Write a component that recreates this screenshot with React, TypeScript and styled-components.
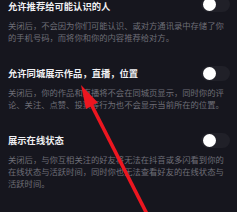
import React from "react";
import styled, { createGlobalStyle } from "styled-components";

const GlobalStyle = createGlobalStyle`
  html, body {
    margin: 0;
    padding: 0;
    background: #16161e;
    overflow: hidden;
  }
`;

const Page = styled.div`
  position: relative;
  width: 237px;
  height: 212px;
  overflow: hidden;
  background: #16161e;
  font-family: "Noto Sans CJK SC", "Noto Sans", sans-serif;
`;

const List = styled.div`
  display: flex;
  flex-direction: column;
  gap: 23px;
  padding: 0 8px;
  margin-top: -1px;
`;

const Section = styled.div`
  display: flex;
  flex-direction: column;
  gap: 6px;
`;

const TitleRow = styled.div`
  display: flex;
  align-items: center;
  justify-content: space-between;
  height: 14px;
`;

const Title = styled.div`
  color: #f0f0f3;
  font-size: 9.3px;
  line-height: 14px;
  font-weight: 600;
  white-space: nowrap;
`;

const Track = styled.div<{ $up?: boolean }>`
  width: 29px;
  height: 15px;
  border-radius: 8px;
  background: #202028;
  display: flex;
  align-items: center;
  padding-left: 2px;
  box-sizing: border-box;
  margin-right: -1px;
  margin-top: ${(p) => (p.$up ? "-4px" : "0")};
`;

const Knob = styled.div`
  width: 13px;
  height: 13px;
  border-radius: 50%;
  background: #ffffff;
`;

const Desc = styled.div`
  color: #6e6e77;
  font-size: 8.3px;
  line-height: 12px;
  white-space: nowrap;
`;

const Arrow = styled.svg`
  position: absolute;
  left: 0;
  top: 0;
  pointer-events: none;
`;

const sections = [
  {
    title: "允许推荐给可能认识的人",
    lines: [
      "关闭后，不会因为你们可能认识、或对方通讯录中存储了你",
      "的手机号码，而将你和你的内容推荐给对方。",
    ],
    up: true,
  },
  {
    title: "允许同城展示作品，直播，位置",
    lines: [
      "关闭后，你的作品和直播将不会在同城页显示，同时你的评",
      "论、关注、点赞、投票等行为也不会显示当前所在的位置。",
    ],
  },
  {
    title: "展示在线状态",
    lines: [
      "关闭后，与你互相关注的好友将无法在抖音或多闪看到你的",
      "在线状态与活跃时间，同时你也无法查看好友的在线状态与",
      "活跃时间。",
    ],
  },
];

export default function App() {
  return (
    <Page>
      <GlobalStyle />
      <List>
        {sections.map((s) => (
          <Section key={s.title}>
            <TitleRow>
              <Title>{s.title}</Title>
              <Track $up={s.up}>
                <Knob />
              </Track>
            </TitleRow>
            <Desc>
              {s.lines.map((l, i) => (
                <div key={i}>{l}</div>
              ))}
            </Desc>
          </Section>
        ))}
      </List>
      <Arrow width="237" height="212" viewBox="0 0 237 212">
        <line x1="91" y1="104" x2="147" y2="214" stroke="#ec1620" strokeWidth="3.6" />
        <polygon points="81,85 97.8,102.5 86,109" fill="#ec1620" />
      </Arrow>
    </Page>
  );
}
